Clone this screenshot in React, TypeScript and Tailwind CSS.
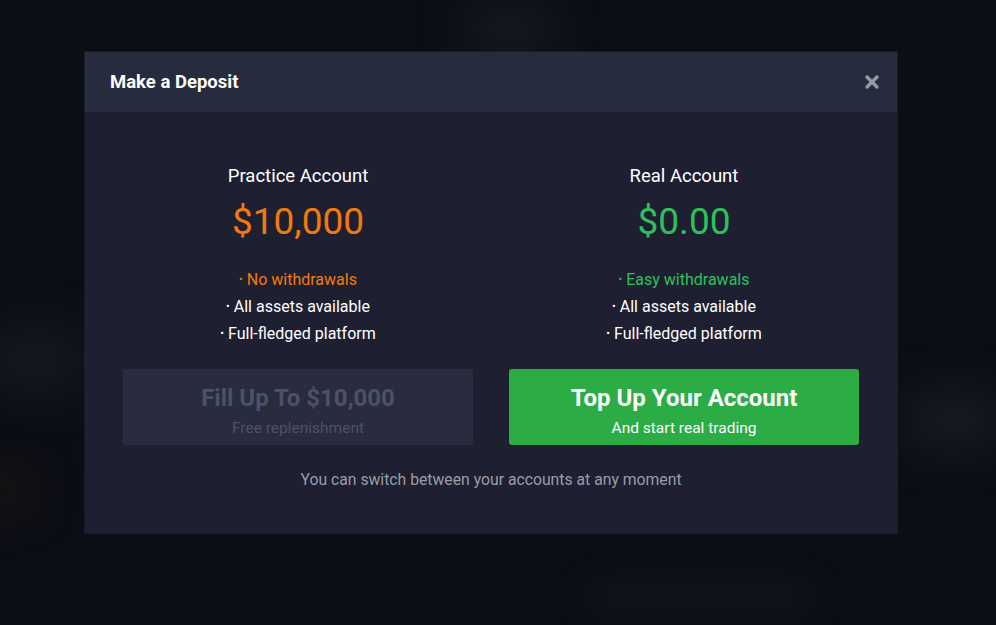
import { X } from 'lucide-react';

const practicePoints = [
  { text: 'No withdrawals', accent: true },
  { text: 'All assets available', accent: false },
  { text: 'Full-fledged platform', accent: false },
];

const realPoints = [
  { text: 'Easy withdrawals', accent: true },
  { text: 'All assets available', accent: false },
  { text: 'Full-fledged platform', accent: false },
];

function AccountColumn({
  title,
  amount,
  amountClass,
  points,
}: {
  title: string;
  amount: string;
  amountClass: string;
  points: { text: string; accent: boolean }[];
}) {
  return (
    <div className="flex flex-col items-center">
      <h3 className="text-[18.5px] leading-[24px] text-white">{title}</h3>
      <p className={`text-[37px] leading-[44px] mt-[12px] ${amountClass}`}>{amount}</p>
      <ul className="mt-[22px] mb-[1px] flex flex-col items-center">
        {points.map((p) => (
          <li
            key={p.text}
            className={`text-[16px] leading-[27px] ${p.accent ? amountClass : 'text-white'}`}
          >
            <span className="text-[11px] align-[2px] mr-[4px]">•</span>
            {p.text}
          </li>
        ))}
      </ul>
    </div>
  );
}

export default function App() {
  return (
    <div
      className="relative w-[996px] h-[625px] overflow-hidden bg-[#0c0e15]"
      style={{ fontFamily: 'Roboto, "Noto Sans", sans-serif' }}
    >
      {/* blurred app behind the modal */}
      <div className="absolute left-[465px] top-[10px] w-[90px] h-[40px] rounded-full bg-[#1a1d27] blur-xl" />
      <div className="absolute left-[-20px] top-[330px] w-[110px] h-[60px] rounded-full bg-[#161922] blur-xl" />
      <div className="absolute left-[-20px] top-[475px] w-[50px] h-[30px] rounded-full bg-[#22170f] blur-xl" />
      <div className="absolute left-[905px] top-[395px] w-[100px] h-[50px] rounded-full bg-[#1b1d25] blur-xl" />
      <div className="absolute left-[590px] top-[585px] w-[220px] h-[25px] rounded-full bg-[#14161c] blur-lg" />

      <div className="flex pt-[52px] pl-[85px]">
        <div className="relative w-[812px] h-[481px] bg-[#1e2032] shadow-[0_0_0_1px_#1a1c2a]">
          {/* header */}
          <div className="flex items-center justify-between h-[60px] bg-[#262b3d] pl-[25px] pr-[15px]">
            <h2 className="text-[18.5px] font-bold text-white pt-[2px]">Make a Deposit</h2>
            <X size={20} strokeWidth={4} className="text-[#9599a3]" />
          </div>

          {/* body */}
          <div className="px-[38px] pt-[52px]">
            <div className="grid grid-cols-2 gap-[36px]">
              <AccountColumn
                title="Practice Account"
                amount="$10,000"
                amountClass="text-[#f27a0c]"
                points={practicePoints}
              />
              <AccountColumn
                title="Real Account"
                amount="$0.00"
                amountClass="text-[#2ec15a]"
                points={realPoints}
              />
            </div>

            <div className="grid grid-cols-2 gap-[36px] mt-[21px]">
              <button className="h-[76px] rounded-[3px] bg-[#282c3e] flex flex-col items-center pt-[14px]">
                <span className="text-[24px] leading-[30px] font-bold text-[#4d5165]">Fill Up To $10,000</span>
                <span className="text-[15.5px] leading-[20px] text-[#4d5165] mt-[5px]">Free replenishment</span>
              </button>
              <button className="h-[76px] rounded-[3px] bg-[#2bac45] flex flex-col items-center pt-[14px]">
                <span className="text-[24px] leading-[30px] font-bold text-white">Top Up Your Account</span>
                <span className="text-[15.5px] leading-[20px] text-white mt-[5px]">And start real trading</span>
              </button>
            </div>

            <p className="text-center text-[15.75px] leading-[22px] text-[#9a9ca6] mt-[24px]">
              You can switch between your accounts at any moment
            </p>
          </div>
        </div>
      </div>
    </div>
  );
}
